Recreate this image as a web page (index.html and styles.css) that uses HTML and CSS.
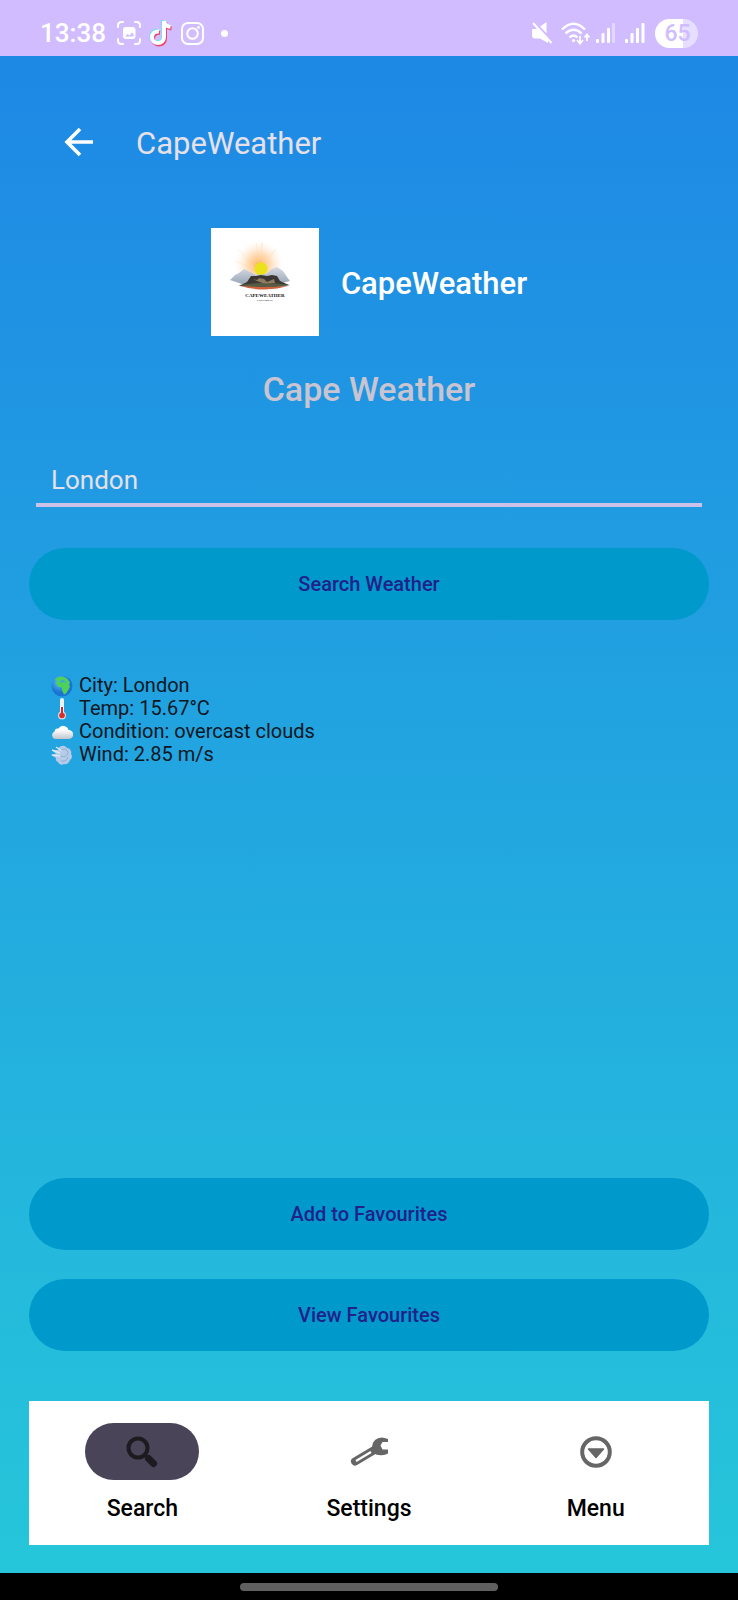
FILE: index.html
```html
<!DOCTYPE html>
<html lang="en">
<head>
<meta charset="utf-8">
<meta name="viewport" content="width=device-width, initial-scale=1">
<title>CapeWeather</title>
<link rel="stylesheet" href="styles.css">
</head>
<body>
<div class="status-bar">
  <div class="status-left">
    <span class="clock">13:38</span>
    <svg class="icon-capture" width="24" height="24" viewBox="0 0 24 24" fill="none" stroke="#fff" stroke-width="2" stroke-linecap="round">
      <path d="M1 6V4.500Q1 1 4.500 1H6M18 1h1.500Q23 1 23 4.500V6M23 18v1.500Q23 23 19.500 23H18M6 23H4.500Q1 23 1 19.500V18"/>
      <rect x="6" y="6" width="12.500" height="12" rx="3" fill="#fff" stroke="none"/>
      <path d="M8 15.500l2.500-2.500 2 1.500 2.500-3 1.500 1.500v2.500z" fill="#d0bcff" stroke="none"/>
    </svg>
    <svg class="icon-tiktok" width="24" height="28" viewBox="0 0 24 28" fill="none" stroke-width="4">
      <path d="M10 12.500c-4-.5-7 2-7 5.500s2.500 6 6 6 6-2.500 6-6V2c.5 3.500 3 5.500 6.500 6" stroke="#62e6f2" transform="translate(-.7 -.8)"/>
      <path d="M10 12.500c-4-.5-7 2-7 5.500s2.500 6 6 6 6-2.500 6-6V2c.5 3.500 3 5.500 6.500 6" stroke="#ee4468" transform="translate(1 1.400)"/>
      <path d="M10 12.500c-4-.5-7 2-7 5.500s2.500 6 6 6 6-2.500 6-6V2c.5 3.500 3 5.500 6.500 6" stroke="#fff"/>
    </svg>
    <svg class="icon-insta" width="23" height="23" viewBox="0 0 23 23" fill="none" stroke="#fff" stroke-width="2">
      <rect x="1" y="1" width="21" height="21" rx="6"/><circle cx="11.500" cy="11.500" r="5.300"/><circle cx="17.500" cy="5.500" r="1.400" fill="#fff" stroke="none"/>
    </svg>
    <span class="dot"></span>
  </div>
  <div class="status-right">
    <svg width="22" height="22" viewBox="0 0 22 22">
      <path d="M2 7h3l4-2 8 10v6L9 16.500H4Q1 16.500 1 13V9Q1 7 2 7z" fill="#fff"/><path d="M9 4.500L15.500 0V12z" fill="#fff"/>
      <path d="M3.500 0l19 20.500" stroke="#d0bcff" stroke-width="2"/><path d="M2 1l18.500 20" stroke="#fff" stroke-width="2"/>
    </svg>
    <svg class="icon-wifi" width="29" height="23" viewBox="0 0 29 23" fill="none" stroke="#fff" stroke-width="2.400">
      <path d="M1 7.500Q12.500-4 24 7.500M4.500 11.500q8-7.500 16 0M8.500 15.500q4-4 8 0"/><circle cx="12.500" cy="18.500" r="1.600" fill="#fff" stroke="none"/>
      <path d="M19 14v7M16 18l3 3.500 3-3.500M26 19v-6M23.500 15.500L26 12.500l2.500 3" stroke-width="1.800"/>
    </svg>
    <svg class="icon-signal" width="19" height="22" viewBox="0 0 19 22" fill="#fff">
      <rect x="0" y="17" width="3" height="4" rx="1"/><rect x="5.500" y="11" width="3" height="10" rx="1"/><rect x="11" y="6" width="3" height="15" rx="1"/><rect x="16" y="1" width="3" height="20" rx="1" opacity=".4"/>
    </svg>
    <svg class="icon-signal2" width="20" height="22" viewBox="0 0 20 22" fill="#fff">
      <rect x="0" y="17" width="3" height="4" rx="1"/><rect x="5.500" y="11" width="3" height="10" rx="1"/><rect x="11" y="6" width="3" height="15" rx="1"/><rect x="16.500" y="1" width="3" height="20" rx="1"/>
    </svg>
    <span class="battery">65</span>
  </div>
</div>

<main class="screen">
  <header class="app-bar">
    <button class="back" type="button" aria-label="Back">
      <svg width="30" height="30" viewBox="0 0 30 30" fill="none" stroke="#fff" stroke-width="3.600"><path d="M29 15H3M16 2L3 15l13 13"/></svg>
    </button>
    <span class="app-title">CapeWeather</span>
  </header>

  <div class="brand">
    <svg class="logo" viewBox="0 0 108 108" role="img" aria-label="CapeWeather logo">
      <defs>
        <radialGradient id="glow"><stop offset="0" stop-color="#ffb04d" stop-opacity=".95"/><stop offset=".45" stop-color="#ffc486" stop-opacity=".6"/><stop offset="1" stop-color="#fff0df" stop-opacity="0"/></radialGradient>
        <linearGradient id="mount" x1="0" x2="0" y1="0" y2="1"><stop offset="0" stop-color="#d5dbe3"/><stop offset="1" stop-color="#97a3b4"/></linearGradient>
      </defs>
      <rect width="108" height="108" fill="#fff"/>
      <circle cx="48" cy="37" r="25" fill="url(#glow)"/>
      <path d="M45 15l3 17 3-17 1 19 13-13-12 16M27 21l15 16M24 33l15 6" stroke="#ffd8ad" stroke-width="1" fill="none" opacity=".35"/>
      <circle cx="50" cy="41" r="6.500" fill="#e9e21d"/>
      <path d="M19 52l5-5 4-2 5-4 6 3 6 3 10-1 6-5 5-2 6 4 4 6 3 4-16 4H34z" fill="url(#mount)"/>
      <path d="M28 58l8-4 4-6 5 0 5-1 6 1 5-1 5 1 3 5 9 4-20 3z" fill="#3d3733"/>
      <path d="M42 51l4 1 2-2 5 1 3 3 7-3 1 4-10 1-8-3z" fill="#8f7b61"/>
      <path d="M28 57q25-4 51 0l-9 2H36z" fill="#5c6547" opacity=".8"/>
      <path d="M30 58q24 2 47 0-10 3-23 3.500Q40 61.500 30 58z" fill="#d1603e"/>
      <text x="54" y="69" text-anchor="middle" class="logo-name">CAPEWEATHER</text>
      <text x="54" y="73" text-anchor="middle" class="logo-sub">CAPE TOWN, SA</text>
    </svg>
    <span class="brand-name">CapeWeather</span>
  </div>

  <h1 class="heading">Cape Weather</h1>

  <form class="search" onsubmit="return false">
    <input class="city" type="text" value="London" aria-label="City">
    <button class="btn" type="submit">Search Weather</button>
  </form>

  <ul class="report">
    <li><svg width="22" height="22" viewBox="0 0 22 22"><defs><radialGradient id="sea" cx=".4" cy=".3"><stop offset="0" stop-color="#5dcbf5"/><stop offset="1" stop-color="#1b74d2"/></radialGradient></defs><circle cx="11" cy="11" r="10.500" fill="url(#sea)"/><path d="M6 2.500l5-1 5 2 3 4-1 2 1 2-2 4-2 3-2 1-2-4v-3l-4-1-2-3 1-3-2-1z" fill="#4fd05a"/><path d="M9 6l3-1 2 1 1 2-3-1-2 1z" fill="#35a8df"/></svg>City: London</li>
    <li><svg width="22" height="22" viewBox="0 0 22 22"><rect x="9" y="0" width="4" height="17" rx="2" fill="#eef2f5"/><circle cx="11" cy="17.500" r="4" fill="#d2dce5"/><path d="M11 9v8" stroke="#d92620" stroke-width="2"/><circle cx="11" cy="17.500" r="2.800" fill="#dc2e27"/></svg>Temp: 15.67°C</li>
    <li><svg width="22" height="22" viewBox="0 0 22 22"><defs><linearGradient id="cloud" x1="0" x2="0" y1="0" y2="1"><stop offset=".3" stop-color="#fff"/><stop offset="1" stop-color="#bfc5cc"/></linearGradient></defs><path d="M4 18a4 4 0 0 1-.5-7.500 3.500 3.500 0 0 1 4-3 5.500 5.500 0 0 1 10 1.500 4.500 4.500 0 0 1 .5 9z" fill="url(#cloud)"/></svg>Condition: overcast clouds</li>
    <li><svg width="22" height="22" viewBox="0 0 22 22"><path d="M7 6a5 5 0 0 1 9-2 4.500 4.500 0 0 1 4 6 4 4 0 0 1-1 6 5 5 0 0 1-6 4 4 4 0 0 1-6-2 3 3 0 0 1-2-4L0 11l5-1-4-4z" fill="#b5cbe8"/><path d="M1 6l8 3M5 3l6 4M1 11l8 1" stroke="#dce8f5" stroke-width="1.500" fill="none"/><path d="M10 6q6-3 7 3-2 5-7 3M10 17q6 1 7-4" stroke="#93add1" stroke-width="1" fill="none"/></svg>Wind: 2.85 m/s</li>
  </ul>

  <div class="actions">
    <button class="btn" type="button">Add to Favourites</button>
    <button class="btn" type="button">View Favourites</button>
  </div>

  <nav class="tabs">
    <a class="tab active" href="#search">
      <span class="tab-icon"><svg width="34" height="34" viewBox="0 0 34 34"><circle cx="13" cy="13" r="9.500" fill="none" stroke="#1d1b20" stroke-width="4"/><path d="M19.500 19.500l3 3" stroke="#1d1b20" stroke-width="3"/><path d="M23.500 23.500l5 5" stroke="#1d1b20" stroke-width="7" stroke-linecap="round"/></svg></span>
      Search
    </a>
    <a class="tab" href="#settings">
      <span class="tab-icon"><svg width="40" height="32" viewBox="0 0 40 32"><path d="M6 25.500L27 13" stroke="#666" stroke-width="8" stroke-linecap="round"/><path d="M39 3Q31-.5 26 4q-4 4-2.500 9.500T30 19q5 1 9-1.500v-4h-5.500l-2-4L33.500 6H39z" fill="#666"/><path d="M7 25L22 16" stroke="#fff" stroke-width="2.200"/></svg></span>
      Settings
    </a>
    <a class="tab" href="#menu">
      <span class="tab-icon"><svg width="32" height="32" viewBox="0 0 32 32"><circle cx="16" cy="16" r="13.800" fill="none" stroke="#666" stroke-width="4"/><path d="M8.500 13h15L16 21.500z" fill="#666" stroke="#666" stroke-width="1.500" stroke-linejoin="round"/></svg></span>
      Menu
    </a>
  </nav>
</main>

<div class="gesture-bar"><span class="handle"></span></div>
</body>
</html>
```
FILE: styles.css
```css
* { box-sizing: border-box; }

body {
  margin: 0;
  min-height: 100vh;
  display: flex;
  flex-direction: column;
  font-family: Roboto, sans-serif;
  background: #000;
}

button, input { font: inherit; border: 0; }
svg { display: block; flex: none; }

.status-bar {
  display: flex;
  justify-content: space-between;
  align-items: center;
  height: 56px;
  padding: 10px 40px 0 40px;
  background: #d0bcff;
  color: #fff;
}
.status-left, .status-right { display: flex; align-items: center; }
.clock { font-size: 26px; font-weight: 500; margin-right: 11px; }
.icon-tiktok { margin-left: 8px; }
.icon-insta { margin-left: 8px; }
.dot { width: 7px; height: 7px; margin-left: 17px; border-radius: 50%; background: #fff; }
.icon-wifi { margin-left: 8px; }
.icon-signal { margin-left: 6px; }
.icon-signal2 { margin-left: 10px; }
.battery {
  width: 43px;
  height: 29px;
  margin-left: 10px;
  padding-left: 2px;
  border-radius: 15px;
  background: linear-gradient(90deg, #fff 65%, #e8deff 65%);
  color: #d0bcff;
  font-size: 23px;
  font-weight: 500;
  line-height: 30px;
  text-align: center;
}

.screen {
  flex: 1;
  display: flex;
  flex-direction: column;
  padding: 28px 29px;
  background: linear-gradient(#1e88e5, #26c6da);
}

.app-bar { display: flex; align-items: center; height: 116px; padding-left: 35px; }
.back { padding: 0; background: none; }
.app-title { margin-left: 42px; padding-top: 3px; font-size: 31px; color: #e6e0e9; }

.brand { display: flex; justify-content: center; align-items: center; gap: 22px; margin-top: 28px; }
.logo { width: 108px; height: 108px; }
.logo-name { font: 900 5px "Liberation Serif", serif; fill: #111; }
.logo-sub { font: 700 2px "Liberation Sans", sans-serif; fill: #444; }
.brand-name { padding-top: 3px; font-size: 31px; font-weight: 500; color: #fff; }

.heading {
  margin: 32px 0 0;
  font-size: 34px;
  font-weight: 500;
  line-height: 42px;
  text-align: center;
  color: #cac4d0;
}

.search { display: flex; flex-direction: column; margin-top: 43px; }
.city {
  height: 54px;
  margin: 0 7px;
  padding: 4px 15px 0;
  border-bottom: 4px solid #ccc2e8;
  border-radius: 0;
  outline: 0;
  background: none;
  color: #e6e0e9;
  font-size: 26px;
}
.btn {
  height: 72px;
  border-radius: 36px;
  background: #0099cc;
  color: #21218a;
  font-size: 20px;
  font-weight: 500;
}
.search .btn { margin-top: 41px; }

.report {
  flex: 1;
  margin: 54px 0 0;
  padding: 0 22px;
  list-style: none;
  font-size: 20px;
  color: #0b1723;
}
.report li { display: flex; align-items: center; gap: 6px; line-height: 23px; height: 23px; }

.actions { display: flex; flex-direction: column; gap: 29px; margin-top: 28px; }

.tabs {
  display: grid;
  grid-template-columns: repeat(3, 1fr);
  margin-top: 50px;
  padding: 22px 0 23px;
  background: #fff;
}
.tab {
  display: flex;
  flex-direction: column;
  align-items: center;
  gap: 15px;
  color: #000;
  font-size: 23px;
  font-weight: 500;
  line-height: 27px;
  text-decoration: none;
}
.tab-icon { display: flex; justify-content: center; align-items: center; width: 114px; height: 57px; border-radius: 29px; }
.active .tab-icon { background: #4a4458; }

.gesture-bar { display: flex; justify-content: center; align-items: center; height: 27px; }
.handle { width: 35%; height: 8px; border-radius: 4px; background: #606060; }
```
